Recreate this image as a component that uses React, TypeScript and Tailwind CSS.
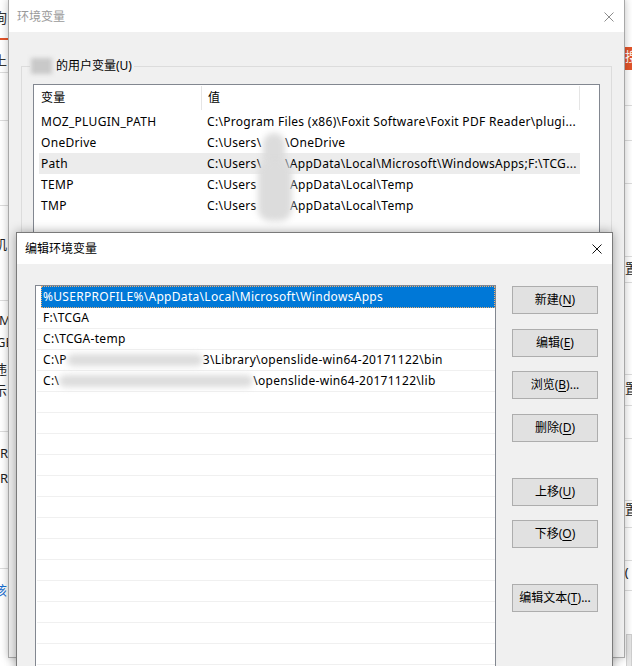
import React from "react";

function XIcon({ color }: { color: string }) {
  return (
    <svg width="10" height="10" viewBox="0 0 10 10" className="block">
      <path d="M0.5 0.5 L9.5 9.5 M9.5 0.5 L0.5 9.5" stroke={color} strokeWidth="1" fill="none" />
    </svg>
  );
}

function Blob({ w }: { w: number }) {
  return (
    <span className="relative inline-block align-middle h-[14px]" style={{ width: w }}>
      <span className="absolute inset-x-0 top-[1px] h-[12px] rounded-full bg-[#dcdcdc] blur-[3px]" />
    </span>
  );
}

function Line() {
  return <div className="h-px bg-[#dcdcdc] shrink-0" />;
}

function LeftStrip() {
  return (
    <div className="absolute left-0 top-0 w-[8px] h-[666px] overflow-hidden bg-white flex flex-col text-[13px] text-[#222]">
      <div className="h-[38px] pt-[11px] -ml-[7px] text-[14px] text-[#333] shrink-0">询</div>
      <div className="h-[2px] bg-[#e2542a] shrink-0" />
      <div className="h-[32px] pt-[14px] -ml-[6px] text-[#333] shrink-0">上</div>
      <Line />
      <div className="h-[47px] shrink-0" />
      <Line />
      <div className="h-[84px] shrink-0" />
      <Line />
      <div className="h-[94px] pt-[32px] -ml-[6px] shrink-0">机</div>
      <Line />
      <div className="h-[130px] pt-[13px] flex flex-col shrink-0">
        <div className="h-[22px] -ml-[1px]">M</div>
        <div className="h-[27px] -ml-[4px]">GB</div>
        <div className="h-[21px] -ml-[6px]">违</div>
        <div className="-ml-[6px]">示</div>
      </div>
      <Line />
      <div className="h-[136px] pt-[15px] flex flex-col shrink-0">
        <div className="h-[25px]">R</div>
        <div>R</div>
      </div>
      <Line />
      <div className="pt-[15px] -ml-[6px] text-[#1a6fd0]">该</div>
    </div>
  );
}

function RightStrip() {
  return (
    <div className="absolute left-[624px] top-0 w-[8px] h-[666px] overflow-hidden bg-white flex flex-col text-[13px] text-[#222]">
      <div className="h-[47px] shrink-0" />
      <div className="h-[23px] bg-[#e2542a] text-white pt-[3px] pl-[1px] shrink-0">搜</div>
      <div className="h-[35px] shrink-0" />
      <Line />
      <div className="h-[34px] shrink-0" />
      <Line />
      <div className="h-[42px] shrink-0" />
      <Line />
      <div className="h-[72px] shrink-0" />
      <Line />
      <div className="h-[25px] pt-[5px] pl-[1px] shrink-0">置</div>
      <Line />
      <div className="h-[91px] shrink-0" />
      <Line />
      <div className="h-[30px] pt-[7px] pl-[1px] shrink-0">置</div>
      <Line />
      <div className="h-[32px] shrink-0" />
      <Line />
      <div className="h-[61px] shrink-0" />
      <Line />
      <div className="h-[26px] pt-[2px] pl-[1px] shrink-0">置</div>
      <Line />
      <div className="h-[32px] shrink-0" />
      <Line />
      <div className="h-[29px] pt-[5px] -ml-[4px] shrink-0">t(</div>
      <Line />
      <div className="h-[43px] shrink-0" />
      <div className="ml-[2px] h-[40px] bg-[#e6e6e6] border border-[#cfcfcf] shrink-0" />
    </div>
  );
}

const backRows: { name: string; pre: string; post?: string; off?: number; sel?: boolean }[] = [
  { name: "MOZ_PLUGIN_PATH", pre: "C:\\Program Files (x86)\\Foxit Software\\Foxit PDF Reader\\plugi..." },
  { name: "OneDrive", pre: "C:\\Users\\", post: "\\OneDrive", off: 78 },
  { name: "Path", pre: "C:\\Users\\", post: "\\AppData\\Local\\Microsoft\\WindowsApps;F:\\TCG...", off: 78, sel: true },
  { name: "TEMP", pre: "C:\\Users", post: "AppData\\Local\\Temp", off: 83 },
  { name: "TMP", pre: "C:\\Users", post: "AppData\\Local\\Temp", off: 83 },
];

function BackDialog() {
  return (
    <div className="absolute left-[8px] top-[-1px] w-[617px] h-[659px] border border-[#a8a8a8] bg-[#f0f0f0] flex flex-col shadow-[0_0_8px_rgba(0,0,0,0.25)]">
      <div className="h-[32px] bg-white flex items-center justify-between pt-[1px] shrink-0">
        <span className="pl-[8px] text-[12px] text-[#9a9a9a]">环境变量</span>
        <span className="mr-[10px]">
          <XIcon color="#8c8c8c" />
        </span>
      </div>
      <div className="relative mx-[12px] mt-[34px] h-[560px] border border-[#dcdcdc]">
        <div className="absolute left-[8px] top-[-9px] h-[16px] flex items-center bg-[#f0f0f0] pr-[2px] pl-[1px]">
          <span className="inline-block w-[21px] h-[16px] bg-[#c9c9c9] blur-[2px]" />
          <span className="ml-[4px] text-[12px]">的用户变量(U)</span>
        </div>
        <div className="relative ml-[11px] mt-[17px] w-[567px] h-[300px] border border-[#828790] bg-white tracking-[0.3px]">
          <div className="flex h-[26px] items-center">
            <div className="w-[168px] h-[24px] flex items-center pl-[7px] border-r border-[#e5e5e5]">变量</div>
            <div className="w-[378px] h-[24px] flex items-center pl-[6px] border-r border-[#e5e5e5]">值</div>
          </div>
          {backRows.map((r) => (
            <div key={r.name} className="h-[21px] flex items-center">
              <div className={`ml-[5px] h-[21px] w-[541px] flex items-center ${r.sel ? "bg-[#ececec]" : ""}`}>
                <div className="w-[168px] pl-[2px] whitespace-nowrap">{r.name}</div>
                <div className="relative flex-1 whitespace-nowrap">
                  <span>{r.pre}</span>
                  {r.post && (
                    <span className="absolute top-0" style={{ left: r.off }}>
                      {r.post}
                    </span>
                  )}
                </div>
              </div>
            </div>
          ))}
          <div className="absolute left-[229px] top-[48px] w-[22px] h-[40px] rounded-full bg-[#dcdcdc] blur-[3px]" />
          <div className="absolute left-[224px] top-[76px] w-[34px] h-[60px] rounded-[12px] bg-[#dcdcdc] blur-[3px]" />
        </div>
      </div>
    </div>
  );
}

const frontRows: { pre: string; blob?: number; post?: string }[] = [
  { pre: "F:\\TCGA" },
  { pre: "C:\\TCGA-temp" },
  { pre: "C:\\P", blob: 136, post: "3\\Library\\openslide-win64-20171122\\bin" },
  { pre: "C:\\", blob: 194, post: "\\openslide-win64-20171122\\lib" },
];

function Btn({ label, k, tail, mt }: { label: string; k: string; tail?: string; mt: string }) {
  return (
    <div className={`${mt} w-[86px] h-[28px] bg-[#e1e1e1] border border-[#adadad] flex items-center justify-center text-[12px]`}>
      <span>
        {label}(<span className="underline underline-offset-2">{k}</span>){tail}
      </span>
    </div>
  );
}

function FrontDialog() {
  const empty = Array.from({ length: 14 });
  return (
    <div className="absolute left-[16px] top-[232px] w-[597px] h-[460px] border border-[#7a7a7a] bg-[#f0f0f0] flex flex-col shadow-[0_0_10px_rgba(0,0,0,0.35)]">
      <div className="h-[31px] bg-white flex items-center justify-between shrink-0">
        <span className="pl-[8px] text-[12px]">编辑环境变量</span>
        <span className="mr-[10px]">
          <XIcon color="#111111" />
        </span>
      </div>
      <div className="flex pl-[18px] pt-[21px] gap-[16px]">
        <div className="w-[461px] h-[420px] border border-[#828790] bg-white overflow-hidden tracking-[0.3px]">
          <div className="h-[22px] ml-[5px] bg-[#0078d7] border border-dotted border-[#f0b070] flex items-center pl-[1px] text-white whitespace-nowrap">
            %USERPROFILE%\AppData\Local\Microsoft\WindowsApps
          </div>
          {frontRows.map((r, i) => (
            <div key={i} className="h-[21px] ml-[1px] border-b border-[#f0f0f0] flex items-center pl-[6px] whitespace-nowrap">
              <span>{r.pre}</span>
              {r.blob && <Blob w={r.blob} />}
              {r.post && <span>{r.post}</span>}
            </div>
          ))}
          {empty.map((_, i) => (
            <div key={"e" + i} className="h-[21px] ml-[1px] border-b border-[#f0f0f0]" />
          ))}
        </div>
        <div className="flex flex-col mt-[1px]">
          <Btn label="新建" k="N" mt="mt-0" />
          <Btn label="编辑" k="E" mt="mt-[15px]" />
          <Btn label="浏览" k="B" tail="..." mt="mt-[14px]" />
          <Btn label="删除" k="D" mt="mt-[15px]" />
          <Btn label="上移" k="U" mt="mt-[36px]" />
          <Btn label="下移" k="O" mt="mt-[14px]" />
          <Btn label="编辑文本" k="T" tail="..." mt="mt-[36px]" />
        </div>
      </div>
    </div>
  );
}

export default function App() {
  return (
    <div className="relative w-[632px] h-[666px] overflow-hidden bg-white font-[family-name:Noto_Sans,Noto_Sans_CJK_SC,sans-serif] text-[12px] leading-none text-black">
      <LeftStrip />
      <RightStrip />
      <BackDialog />
      <FrontDialog />
    </div>
  );
}
